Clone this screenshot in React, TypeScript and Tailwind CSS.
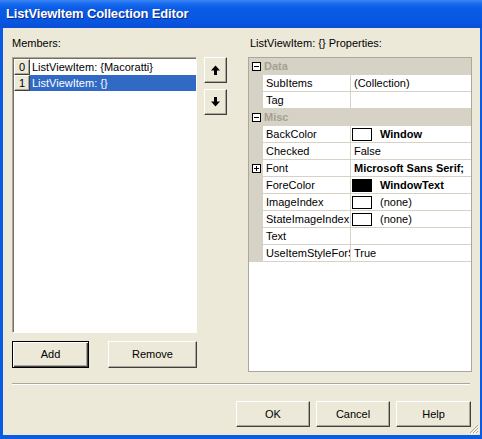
import React from 'react'

const font = { fontFamily: '"Liberation Sans", Arial, sans-serif' }

const raised =
  'border border-t-white border-l-white border-r-[#404040] border-b-[#404040] shadow-[inset_-1px_-1px_0_#aca899] bg-[#ece9d8]'

function Btn({ label, className }: { label: string; className: string }) {
  return (
    <div className={`flex items-center justify-center text-[11px] text-black ${raised} ${className}`}>
      {label}
    </div>
  )
}

function Arrow({ up }: { up?: boolean }) {
  return (
    <svg width="9" height="10" viewBox="0 0 9 10" className={up ? '' : 'rotate-180'}>
      <path d="M4.5 0.5 L9 5.5 L6 5.5 L6 10 L3 10 L3 5.5 L0 5.5 Z" fill="#000" />
    </svg>
  )
}

function Expander({ plus }: { plus?: boolean }) {
  return (
    <div className="relative h-[9px] w-[9px] border border-black bg-white">
      <div className="absolute left-[1px] top-[3px] h-[1px] w-[5px] bg-black" />
      {plus && <div className="absolute left-[3px] top-[1px] h-[5px] w-[1px] bg-black" />}
    </div>
  )
}

function Category({ label }: { label: string }) {
  return (
    <div className="flex h-[17px] items-center border-b border-[#d6d2c6] bg-[#d6d2c6]">
      <div className="flex w-[14px] justify-center">
        <Expander />
      </div>
      <span className="pl-[1px] text-[11px] font-bold text-[#a5a190]">{label}</span>
    </div>
  )
}

function Prop({
  name,
  value,
  bold,
  swatch,
  expand,
}: {
  name: string
  value?: string
  bold?: boolean
  swatch?: 'white' | 'black'
  expand?: boolean
}) {
  return (
    <div className="flex h-[17px] border-b border-[#d6d2c6]">
      <div className="flex w-[14px] items-center justify-center bg-[#d6d2c6]">{expand && <Expander plus />}</div>
      <div className="flex w-[88px] items-center overflow-hidden whitespace-nowrap border-r border-[#d6d2c6] pl-[3px] text-[11px]">
        {name}
      </div>
      <div
        className={`flex min-w-0 flex-1 items-center overflow-hidden whitespace-nowrap text-[11px] ${
          swatch ? 'pl-[1px]' : 'pl-[3px]'
        }`}
      >
        {swatch && (
          <div
            className={`mr-[8px] h-[13px] w-[20px] shrink-0 border border-black ${
              swatch === 'black' ? 'bg-black' : 'bg-white'
            }`}
          />
        )}
        <span className={bold ? 'font-bold' : ''}>{value}</span>
      </div>
    </div>
  )
}

export default function App() {
  return (
    <div className="relative flex h-[439px] w-[482px] flex-col bg-[#0a5ce4] text-black" style={font}>
      <div className="flex h-[28px] shrink-0 items-center bg-[linear-gradient(to_bottom,#3f86f2_0%,#1a6cf0_12%,#0a5ce6_30%,#0855e0_80%,#0a4fd4_100%)] pl-[6px]">
        <span className="text-[13px] font-bold tracking-[-0.15px] text-white [text-shadow:1px_1px_0_#0a2a8a]">
          ListViewItem Collection Editor
        </span>
      </div>

      <div className="mb-[4px] ml-[3px] mr-[2px] flex flex-1 flex-col bg-[#ece9d8] pl-[9px]">
        <div className="flex pt-[9px]">
          {/* members */}
          <div className="flex flex-col">
            <div className="h-[13px] text-[11px] leading-[13px]">Members:</div>
            <div className="mt-[7px] flex">
              <div className="h-[276px] w-[185px] border border-t-[#aca899] border-l-[#aca899] border-r-white border-b-white bg-white shadow-[inset_1px_1px_0_#716f64]">
                <div className="pl-[1px] pt-[1px]">
                  <div className="flex h-[16px]">
                    <div className={`flex w-[16px] items-center justify-center text-[11px] ${raised}`}>0</div>
                    <div className="flex flex-1 items-center pl-[2px] text-[11px]">ListViewItem: {'{Macoratti}'}</div>
                  </div>
                  <div className="flex h-[16px]">
                    <div className={`flex w-[16px] items-center justify-center text-[11px] ${raised}`}>1</div>
                    <div className="flex flex-1 items-center bg-[#316ac5] pl-[2px] text-[11px] text-white">
                      ListViewItem: {'{}'}
                    </div>
                  </div>
                </div>
              </div>
              <div className="ml-[7px] flex flex-col gap-[6px]">
                <div className={`flex h-[26px] w-[23px] items-center justify-center ${raised}`}>
                  <Arrow up />
                </div>
                <div className={`flex h-[26px] w-[23px] items-center justify-center ${raised}`}>
                  <Arrow />
                </div>
              </div>
            </div>
            <div className="mt-[8px] flex gap-[19px]">
              <div className="flex h-[27px] w-[77px] items-center justify-center border border-black bg-[#ece9d8] text-[11px] shadow-[inset_1px_1px_0_#fff,inset_-1px_-1px_0_#404040,inset_-2px_-2px_0_#aca899]">
                Add
              </div>
              <Btn label="Remove" className="h-[27px] w-[89px]" />
            </div>
          </div>

          {/* properties */}
          <div className="ml-[21px] flex flex-col">
            <div className="h-[13px] pl-[2px] text-[11px] leading-[13px]">ListViewItem: {'{}'} Properties:</div>
            <div className="mt-[7px] flex h-[315px] w-[224px] flex-col border border-[#aca899] bg-white">
              <Category label="Data" />
              <Prop name="SubItems" value="(Collection)" />
              <Prop name="Tag" />
              <Category label="Misc" />
              <Prop name="BackColor" value="Window" bold swatch="white" />
              <Prop name="Checked" value="False" />
              <Prop name="Font" value="Microsoft Sans Serif;" bold expand />
              <Prop name="ForeColor" value="WindowText" bold swatch="black" />
              <Prop name="ImageIndex" value="(none)" swatch="white" />
              <Prop name="StateImageIndex" value="(none)" swatch="white" />
              <Prop name="Text" />
              <Prop name="UseItemStyleForS" value="True" />
            </div>
          </div>
        </div>

        <div className="mt-[11px] h-[2px] w-[458px] border-t border-b border-t-[#aca899] border-b-white" />

        <div className="mt-[16px] flex w-[459px] justify-end gap-[6px]">
          <Btn label="OK" className="h-[26px] w-[74px]" />
          <Btn label="Cancel" className="h-[26px] w-[74px]" />
          <Btn label="Help" className="h-[26px] w-[75px]" />
        </div>
      </div>

      <svg className="absolute bottom-[5px] right-[3px]" width="10" height="10" viewBox="0 0 10 10">
        <path d="M9 1 L1 9 M9 4 L4 9 M9 7 L7 9" stroke="#aca899" strokeWidth="1" />
        <path d="M10 2 L2 10 M10 5 L5 10 M10 8 L8 10" stroke="#ffffff" strokeWidth="1" />
      </svg>
    </div>
  )
}
